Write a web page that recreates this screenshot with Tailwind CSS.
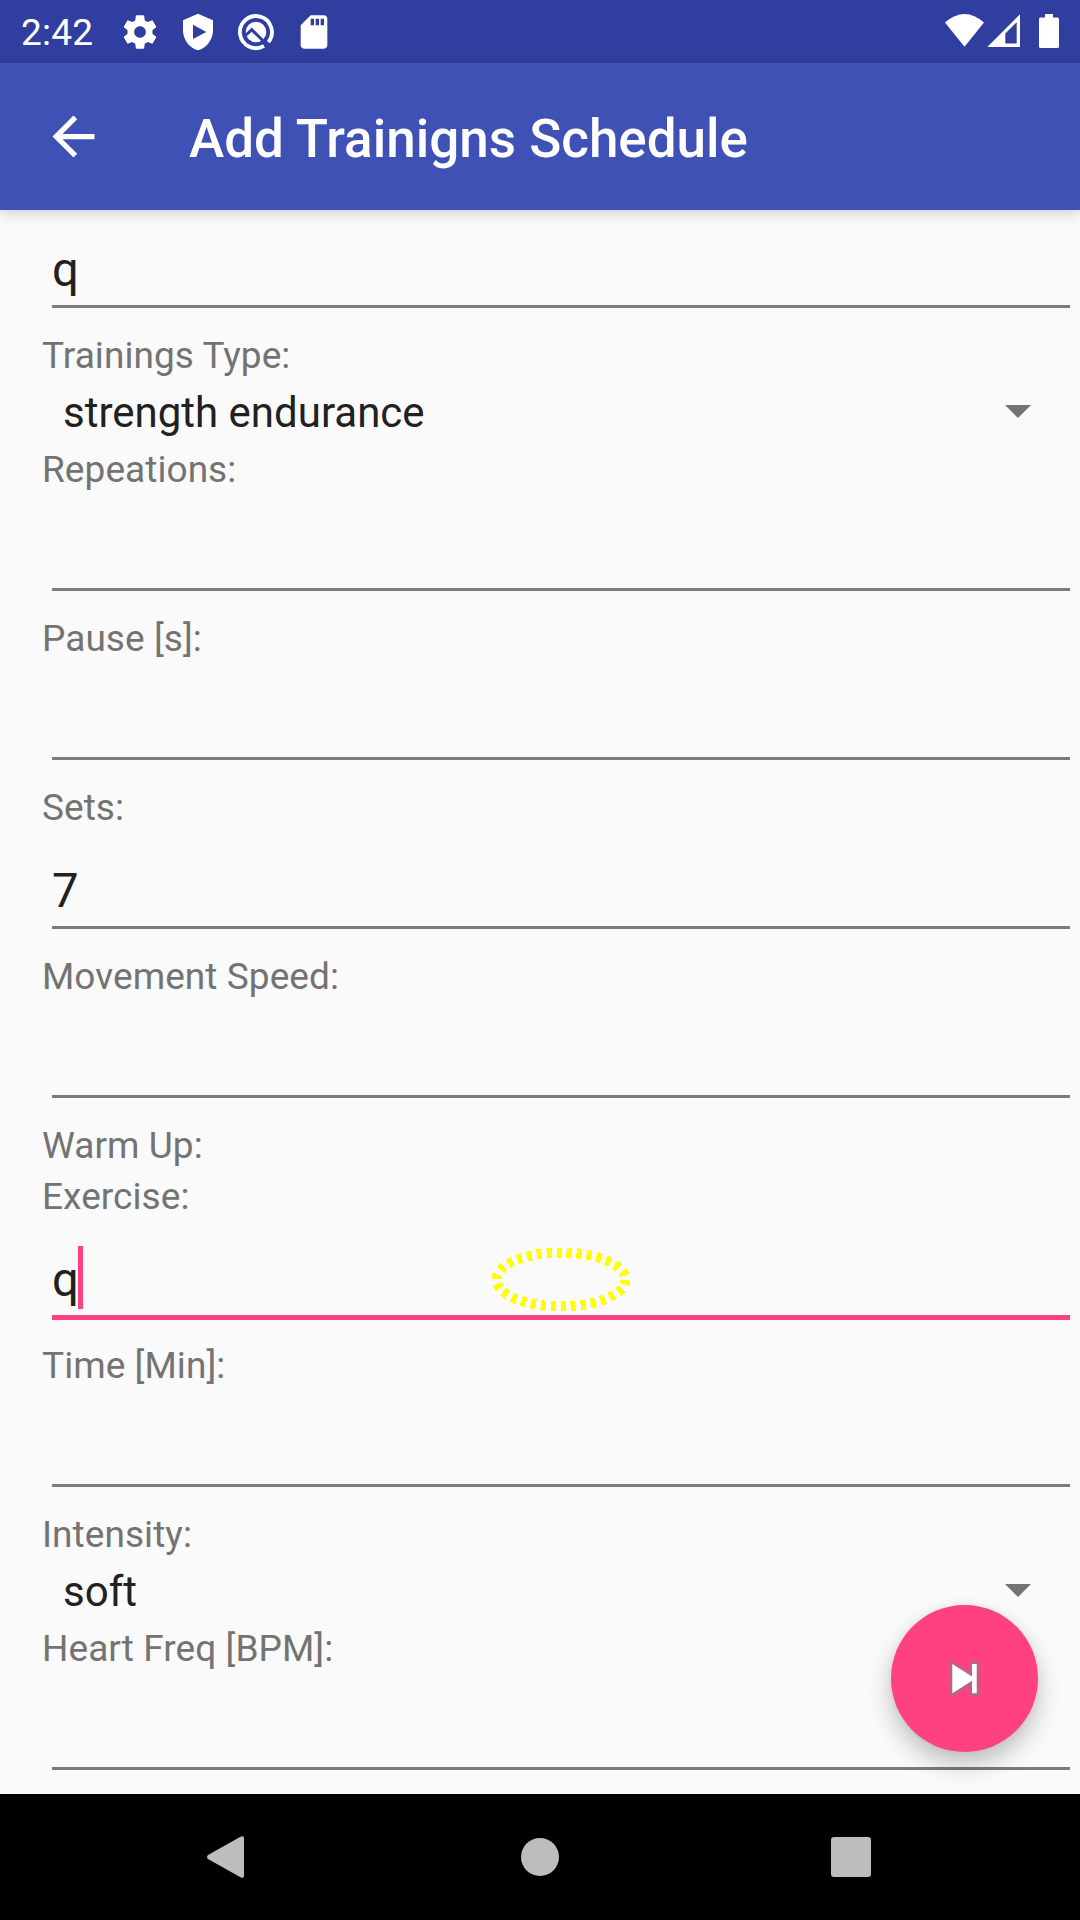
<!DOCTYPE html>
<html lang="en">
<head>
<meta charset="utf-8">
<title>Add Trainigns Schedule</title>
<script src="https://cdn.jsdelivr.net/npm/@tailwindcss/browser@4"></script>
</head>
<body class="bg-black">
<div class="relative flex h-[1920px] w-[1080px] flex-col overflow-hidden bg-[#fafafa] font-[Roboto,sans-serif] text-[37px] leading-[51px] text-[#737373]">

  <!-- Status bar -->
  <header class="z-10 flex h-[63px] shrink-0 items-center justify-between bg-[#303f9f] pl-[21px] pr-[21px] text-white">
    <div class="flex h-full items-center">
      <span class="w-[99px] pt-[2px] tracking-[0.2px] leading-[63px]">2:42</span>
      <div class="flex gap-[18px]">
        <svg class="size-[40px]" viewBox="0 0 24 24" fill="currentColor"><path d="M19.43 12.98c.04-.32.07-.64.07-.98s-.03-.66-.07-.98l2.11-1.65c.19-.15.24-.42.12-.64l-2-3.46c-.12-.22-.39-.3-.61-.22l-2.49 1c-.52-.4-1.08-.73-1.69-.98l-.38-2.65C14.46 2.18 14.25 2 14 2h-4c-.25 0-.46.18-.49.42l-.38 2.65c-.61.25-1.17.59-1.69.98l-2.49-1c-.23-.09-.49 0-.61.22l-2 3.46c-.13.22-.07.49.12.64l2.11 1.65c-.04.32-.07.65-.07.98s.03.66.07.98l-2.11 1.65c-.19.15-.24.42-.12.64l2 3.46c.12.22.39.3.61.22l2.49-1c.52.4 1.08.73 1.69.98l.38 2.65c.03.24.24.42.49.42h4c.25 0 .46-.18.49-.42l.38-2.65c.61-.25 1.17-.59 1.69-.98l2.49 1c.23.09.49 0 .61-.22l2-3.46c.12-.22.07-.49-.12-.64l-2.11-1.65zM12 15.5c-1.93 0-3.5-1.57-3.5-3.5s1.57-3.5 3.5-3.5 3.5 1.57 3.5 3.5-1.57 3.5-3.5 3.5z"/></svg>
        <svg class="size-[40px]" viewBox="0 0 24 24" fill="currentColor" fill-rule="evenodd"><path d="M12 1 3 5v6c0 5.55 3.84 10.74 9 12 5.160-1.260 9-6.450 9-12V5zM9 7.700 17 12 9 16.200z"/></svg>
        <svg class="size-[40px]" viewBox="0 0 40 40" fill="none"><path d="M28 33.900A16 16 0 1 1 32.400 30.100" stroke="currentColor" stroke-width="3.800"/><circle cx="20" cy="20" r="10.300" fill="currentColor"/><path d="M9.500 23.500 15.700 17.600 30 31.800" stroke="#303f9f" stroke-width="3"/></svg>
        <svg class="size-[40px]" viewBox="0 0 24 24" fill="currentColor"><path d="M18 2h-8L4.020 8 4 20c0 1.100.9 2 2 2h12c1.100 0 2-.9 2-2V4c0-1.100-.9-2-2-2zm-6 6h-2V4h2v4zm3 0h-2V4h2v4zm3 0h-2V4h2v4z"/></svg>
      </div>
    </div>
    <svg class="h-[63px] w-[114px]" viewBox="945 0 114 63" fill="currentColor"><path d="M945 22.500Q964.500 5.500 984 22.500L964.500 46.700z"/><path fill-rule="evenodd" d="M987.300 47 1020 14.300V47zM1005.300 43.500H1016.700V22.300L1005.300 33.500z"/><path d="M1045 14h8v3.500h4.500q1.500 0 1.500 1.500v27.500q0 1.500-1.500 1.500h-17q-1.500 0-1.500-1.500V19q0-1.500 1.500-1.500h4.500z"/></svg>
  </header>

  <!-- App bar -->
  <nav class="z-10 flex h-[147px] shrink-0 items-center bg-[#3f51b5] pl-[42px] text-white shadow-[0_4px_12px_rgba(0,0,0,0.16)]">
    <svg class="size-[63px]" viewBox="0 0 24 24" fill="currentColor"><path d="M20 11H7.830l5.590-5.590L12 4l-8 8 8 8 1.410-1.410L7.830 13H20z"/></svg>
    <h1 class="ml-[84px] pt-[6px] text-[53px] font-medium leading-[63px]">Add Trainigns Schedule</h1>
  </nav>

  <!-- Form -->
  <main class="flex grow flex-col pl-[42px] pt-[2px]">
    <div class="mb-[22px] ml-[10px] mr-[10px] flex h-[96px] flex-col justify-end border-b-[3px] border-[#7b7b7b] pb-[5px] text-[47.25px] leading-[60px] text-[#212121]">q</div>
    <label class="tracking-[0.06px]">Trainings Type:</label>
    <div class="flex h-[63px] items-center justify-between pl-[21px] pr-[49.5px] text-[42px] text-[#212121]">strength endurance<svg class="mb-[2px] h-[13px] w-[26px]" viewBox="0 0 26 13" fill="#737373"><path d="M0 0h26L13 13z"/></svg></div>
    <label class="tracking-[0.06px]">Repeations:</label>
    <div class="mb-[22px] ml-[10px] mr-[10px] h-[96px] border-b-[3px] border-[#7b7b7b]"></div>
    <label class="tracking-[0.06px]">Pause [s]:</label>
    <div class="mb-[22px] ml-[10px] mr-[10px] h-[96px] border-b-[3px] border-[#7b7b7b]"></div>
    <label class="tracking-[0.06px]">Sets:</label>
    <div class="mb-[22px] ml-[10px] mr-[10px] flex h-[96px] flex-col justify-end border-b-[3px] border-[#7b7b7b] pb-[5px] text-[47.25px] leading-[60px] text-[#212121]">7</div>
    <label class="tracking-[0.06px]">Movement Speed:</label>
    <div class="mb-[22px] ml-[10px] mr-[10px] h-[96px] border-b-[3px] border-[#7b7b7b]"></div>
    <label class="tracking-[0.06px]">Warm Up:</label>
    <label class="tracking-[0.06px]">Exercise:</label>
    <div class="relative mb-[20px] ml-[10px] mr-[10px] flex h-[98px] flex-col justify-end border-b-[5px] border-[#ff4081] pb-[5px] text-[47.25px] leading-[60px] text-[#212121]">q<span class="absolute left-[26px] top-[24px] h-[63px] w-[5px] bg-[#ff4081]"></span></div>
    <label class="tracking-[0.06px]">Time [Min]:</label>
    <div class="mb-[22px] ml-[10px] mr-[10px] h-[96px] border-b-[3px] border-[#7b7b7b]"></div>
    <label class="tracking-[0.06px]">Intensity:</label>
    <div class="flex h-[63px] items-center justify-between pl-[21px] pr-[49.5px] text-[42px] text-[#212121]">soft<svg class="mb-[2px] h-[13px] w-[26px]" viewBox="0 0 26 13" fill="#737373"><path d="M0 0h26L13 13z"/></svg></div>
    <label class="tracking-[0.06px]">Heart Freq [BPM]:</label>
    <div class="mb-[22px] ml-[10px] mr-[10px] h-[96px] border-b-[3px] border-[#7b7b7b]"></div>
  </main>

  <!-- Touch marker -->
  <svg class="absolute left-[485px] top-[1240px] h-[80px] w-[150px]" viewBox="485 1240 150 80" fill="none" shape-rendering="crispEdges"><ellipse cx="561" cy="1279.500" rx="64.500" ry="27" stroke="#ffff00" stroke-width="10" stroke-dasharray="5 5"/></svg>

  <!-- Floating action button -->
  <button class="absolute left-[891px] top-[1605px] size-[147px] rounded-full bg-[#ff4081] shadow-[0_12px_24px_rgba(0,0,0,0.24),0_0_6px_rgba(0,0,0,0.06)]">
    <svg class="size-[147px]" viewBox="0 0 147 147"><g fill="#b9658a" stroke="#b9658a" stroke-width="5.500" stroke-linejoin="round"><path d="M61.300 59v29.500L83 74z"/><path d="M81 59h4.700v29.500H81z"/></g><path fill="#fff" d="M61.300 59 81 71.500V59h4.700v29.300H81V75.800L61.300 88.300z"/></svg>
  </button>

  <!-- System navigation -->
  <footer class="z-10 flex h-[126px] shrink-0 items-center bg-black pl-[207px] text-[#bdbdbd]">
    <svg class="h-[42px] w-[37px]" viewBox="0 0 37 42" fill="currentColor"><path d="M1 19 33.500.8Q37-1 37 2.500v37Q37 43 33.500 41.200L1 23Q-1 21 1 19z"/></svg>
    <span class="ml-[277px] size-[38px] rounded-full bg-[#bdbdbd]"></span>
    <span class="ml-[272px] size-[40px] rounded-[3px] bg-[#bdbdbd]"></span>
  </footer>
</div>
</body>
</html>
